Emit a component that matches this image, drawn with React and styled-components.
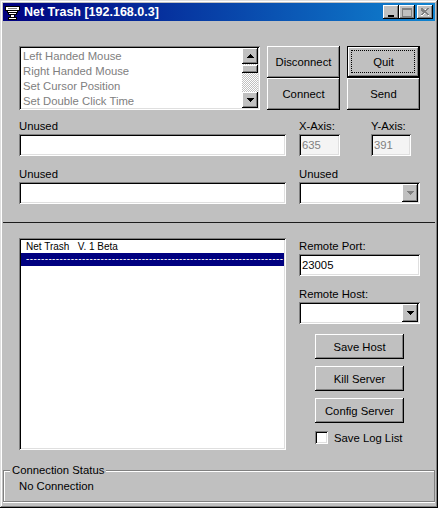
import React from "react";
import styled, { createGlobalStyle, css } from "styled-components";

const GlobalStyle = createGlobalStyle`
  html, body {
    margin: 0;
    padding: 0;
    background: #c0c0c0;
  }
  * {
    box-sizing: border-box;
  }
`;

const raised = css`
  background: #c0c0c0;
  box-shadow:
    inset -1px -1px 0 #000,
    inset 1px 1px 0 #fff,
    inset -2px -2px 0 #808080;
`;

const sunken = css`
  background: #fff;
  box-shadow:
    inset 1px 1px 0 #808080,
    inset -1px -1px 0 #fff,
    inset 2px 2px 0 #000,
    inset -2px -2px 0 #dfdfdf;
`;

const Window = styled.div`
  width: 438px;
  height: 508px;
  padding: 3px 3px 0;
  display: flex;
  flex-direction: column;
  background: #c0c0c0;
  color: #000;
  font-family: "Liberation Sans", Arial, sans-serif;
  font-size: 11.3px;
  overflow: hidden;
  box-shadow:
    inset -1px -1px 0 #000,
    inset 1px 1px 0 #dfdfdf,
    inset -2px -2px 0 #808080,
    inset 2px 2px 0 #fff;
`;

const TitleBar = styled.div`
  height: 18px;
  flex: none;
  display: flex;
  align-items: center;
  padding: 0 2px 0 2px;
  background: linear-gradient(90deg, #000080 0%, #1084d0 100%);
`;

const TitleText = styled.div`
  margin-left: 4px;
  color: #fff;
  font-family: "Liberation Sans", Arial, sans-serif;
  font-weight: bold;
  font-size: 12.5px;
  white-space: nowrap;
`;

const TitleButtons = styled.div`
  margin-left: auto;
  display: flex;
`;

const TitleButton = styled.div`
  ${raised}
  width: 16px;
  height: 14px;
  display: flex;
  align-items: center;
  justify-content: center;
  margin-left: ${(p) => (p.$gap ? "2px" : "0")};
`;

const Body = styled.div`
  flex: 1;
  display: flex;
  flex-direction: column;
  min-height: 0;
`;

const TopSection = styled.div`
  padding: 25px 15px 0 16px;
  display: flex;
  flex-direction: column;
`;

const ControlRow = styled.div`
  display: flex;
  align-items: flex-start;
`;

const ListBox = styled.div`
  ${sunken}
  width: 241px;
  height: 64px;
  padding: 2px;
  display: flex;
  justify-content: space-between;
  margin-right: 7px;
`;

const Options = styled.div`
  padding: 1px 0 0 2px;
  color: #808080;
`;

const OptionItem = styled.div`
  height: 15px;
  line-height: 15px;
  white-space: nowrap;
`;

const ScrollBar = styled.div`
  width: 16px;
  display: flex;
  flex-direction: column;
  background-color: #fff;
  background-image: repeating-conic-gradient(#c0c0c0 0 25%, #fff 0 50%);
  background-size: 2px 2px;
`;

const ScrollButton = styled.div`
  ${raised}
  width: 16px;
  height: 16px;
  flex: none;
  display: flex;
  align-items: center;
  justify-content: center;
  margin-top: ${(p) => (p.$end ? "auto" : "0")};
`;

const ScrollThumb = styled.div`
  ${raised}
  width: 16px;
  height: 8px;
  margin-top: 1px;
  flex: none;
`;

const ButtonStack = styled.div`
  display: flex;
  flex-direction: column;
  width: 73px;
  margin-right: ${(p) => p.$gap || 0}px;
`;

const PushButton = styled.button`
  ${raised}
  display: block;
  position: relative;
  width: ${(p) => p.$width || 73}px;
  height: ${(p) => p.$height || 32}px;
  margin: 0;
  padding: 0;
  border: none;
  font: inherit;
  color: #000;
  ${(p) =>
    p.$focused &&
    css`
      box-shadow:
        inset 0 0 0 1px #000,
        inset -2px -2px 0 #000,
        inset 2px 2px 0 #fff,
        inset -3px -3px 0 #808080;
      &::after {
        content: "";
        position: absolute;
        inset: 4px 5px 5px 4px;
        border: 1px dotted #000;
      }
    `}
`;

const FieldRow = styled.div`
  display: flex;
  margin-top: ${(p) => p.$top}px;
`;

const Field = styled.div`
  width: ${(p) => p.$width}px;
  margin-right: ${(p) => p.$gap || 0}px;
  flex: none;
`;

const FieldLabel = styled.div`
  height: 14px;
  line-height: 12px;
  white-space: nowrap;
`;

const TextBox = styled.div`
  ${sunken}
  height: 22px;
  line-height: 22px;
  padding-left: 3px;
  color: ${(p) => (p.$disabled ? "#808080" : "#000")};
  background: ${(p) => (p.$disabled ? "#f4f4f4" : "#fff")};
`;

const ComboBox = styled.div`
  ${sunken}
  height: 22px;
  padding: 2px;
  display: flex;
  justify-content: flex-end;
`;

const ComboButton = styled.div`
  ${raised}
  width: 16px;
  height: 18px;
  display: flex;
  align-items: center;
  justify-content: center;
`;

const Divider = styled.div`
  height: 1px;
  margin: 18px 0 0;
  background: #1c1c1c;
`;

const LowerSection = styled.div`
  padding: 15px 15px 0 16px;
  display: flex;
  gap: 13px;
`;

const LogList = styled.div`
  ${sunken}
  width: 267px;
  height: 212px;
  padding: 2px;
  flex: none;
`;

const LogRow = styled.div`
  height: 13px;
  line-height: 13px;
  padding-left: 5px;
  white-space: pre;
  font-size: 10px;
`;

const SelectedRow = styled(LogRow)`
  background: #000080;
  color: #fff;
  line-height: 11px;
  letter-spacing: 0.4px;
`;

const SideColumn = styled.div`
  width: 121px;
  padding-top: 2px;
  display: flex;
  flex-direction: column;
`;

const SideField = styled.div`
  margin-bottom: ${(p) => p.$gap || 0}px;
`;

const SideButtons = styled.div`
  display: flex;
  flex-direction: column;
  gap: 7px;
  padding-left: 16px;
`;

const CheckRow = styled.label`
  display: flex;
  align-items: center;
  gap: 6px;
  margin-top: 8px;
  padding-left: 16px;
  white-space: nowrap;
`;

const CheckBox = styled.span`
  ${sunken}
  width: 13px;
  height: 13px;
  flex: none;
`;

const StatusGroup = styled.div`
  position: relative;
  height: 32px;
  margin: 20px 0 0;
  border: 1px solid #808080;
  box-shadow:
    0 1px 0 #fff,
    inset 0 1px 0 #fff,
    inset 1px 0 0 #fff;
  padding: 8px 0 0 15px;
  line-height: 14px;
`;

const StatusLegend = styled.div`
  position: absolute;
  top: -7px;
  left: 6px;
  padding: 0 2px;
  line-height: 13px;
  background: #c0c0c0;
`;

const Triangle = ({ up, color = "#000" }) => (
  <svg width="7" height="4" viewBox="0 0 7 4" shapeRendering="crispEdges">
    <path d={up ? "M3.5 0L7 4H0z" : "M0 0h7L3.5 4z"} fill={color} />
  </svg>
);

const TrashIcon = () => (
  <svg width="15" height="15" viewBox="0 0 15 15" shapeRendering="crispEdges">
    <path d="M0 1h15v5h-2v2h-1v2h-2v2h2v3H3v-3h2v-2H3V8H2V6H0z" fill="#000" />
    <path d="M1 2h13v3H1zM3 6h9v1H3zM4 8h7v1H4zM6 10h3v2H6zM4 13h7v1H4z" fill="#fff" />
    <path d="M3 3h9v1H3z" fill="#808080" />
  </svg>
);

const MinimizeGlyph = () => (
  <svg width="8" height="9" viewBox="0 0 8 9" shapeRendering="crispEdges">
    <path d="M1 7h6v2H1z" fill="#000" />
  </svg>
);

const MaximizeGlyph = () => (
  <svg width="10" height="9" viewBox="0 0 10 9" shapeRendering="crispEdges">
    <path d="M0 0h10v9H0zM1 2v6h8V2z" fill="#808080" fillRule="evenodd" />
  </svg>
);

const CloseGlyph = () => (
  <svg width="10" height="9" viewBox="0 0 10 9" shapeRendering="crispEdges">
    <path
      d="M2 1h2v1h1V1h3v1H7v1H6v1h1v1h1v1h1v2H8V7H7V6H6V5H5v1H4v1H3v1H1V7h1V6h1V5h1V4H3V3H2z"
      fill="#fff"
    />
    <path
      d="M1 0h2v1h1v1h2V1h1V0h2v1H8v1H7v1H6v1h1v1h1v1h1v1H7V6H6V5H4v1H3v1H1V6h1V5h1V4H2V3H1V2z"
      fill="#808080"
    />
  </svg>
);

const options = [
  "Left Handed Mouse",
  "Right Handed Mouse",
  "Set Cursor Position",
  "Set Double Click Time",
];

export default function App() {
  return (
    <>
      <GlobalStyle />
      <Window>
        <TitleBar>
          <TrashIcon />
          <TitleText>Net Trash [192.168.0.3]</TitleText>
          <TitleButtons>
            <TitleButton>
              <MinimizeGlyph />
            </TitleButton>
            <TitleButton>
              <MaximizeGlyph />
            </TitleButton>
            <TitleButton $gap>
              <CloseGlyph />
            </TitleButton>
          </TitleButtons>
        </TitleBar>
        <Body>
          <TopSection>
            <ControlRow>
              <ListBox>
                <Options>
                  {options.map((o) => (
                    <OptionItem key={o}>{o}</OptionItem>
                  ))}
                </Options>
                <ScrollBar>
                  <ScrollButton>
                    <Triangle up />
                  </ScrollButton>
                  <ScrollThumb />
                  <ScrollButton $end>
                    <Triangle />
                  </ScrollButton>
                </ScrollBar>
              </ListBox>
              <ButtonStack $gap={7}>
                <PushButton>Disconnect</PushButton>
                <PushButton>Connect</PushButton>
              </ButtonStack>
              <ButtonStack>
                <PushButton $focused>Quit</PushButton>
                <PushButton>Send</PushButton>
              </ButtonStack>
            </ControlRow>
            <FieldRow $top={10}>
              <Field $width={267} $gap={13}>
                <FieldLabel>Unused</FieldLabel>
                <TextBox />
              </Field>
              <Field $width={41} $gap={31}>
                <FieldLabel>X-Axis:</FieldLabel>
                <TextBox $disabled>635</TextBox>
              </Field>
              <Field $width={40}>
                <FieldLabel>Y-Axis:</FieldLabel>
                <TextBox $disabled>391</TextBox>
              </Field>
            </FieldRow>
            <FieldRow $top={12}>
              <Field $width={267} $gap={13}>
                <FieldLabel>Unused</FieldLabel>
                <TextBox />
              </Field>
              <Field $width={121}>
                <FieldLabel>Unused</FieldLabel>
                <ComboBox>
                  <ComboButton>
                    <Triangle color="#808080" />
                  </ComboButton>
                </ComboBox>
              </Field>
            </FieldRow>
          </TopSection>
          <Divider />
          <LowerSection>
            <LogList>
              <LogRow>{"Net Trash   V. 1 Beta"}</LogRow>
              <SelectedRow>{"-".repeat(69)}</SelectedRow>
            </LogList>
            <SideColumn>
              <SideField $gap={12}>
                <FieldLabel>Remote Port:</FieldLabel>
                <TextBox>23005</TextBox>
              </SideField>
              <SideField $gap={10}>
                <FieldLabel>Remote Host:</FieldLabel>
                <ComboBox>
                  <ComboButton>
                    <Triangle />
                  </ComboButton>
                </ComboBox>
              </SideField>
              <SideButtons>
                <PushButton $width={89} $height={25}>Save Host</PushButton>
                <PushButton $width={89} $height={25}>Kill Server</PushButton>
                <PushButton $width={89} $height={25}>Config Server</PushButton>
              </SideButtons>
              <CheckRow>
                <CheckBox />
                Save Log List
              </CheckRow>
            </SideColumn>
          </LowerSection>
          <StatusGroup>
            <StatusLegend>Connection Status</StatusLegend>
            No Connection
          </StatusGroup>
        </Body>
      </Window>
    </>
  );
}
